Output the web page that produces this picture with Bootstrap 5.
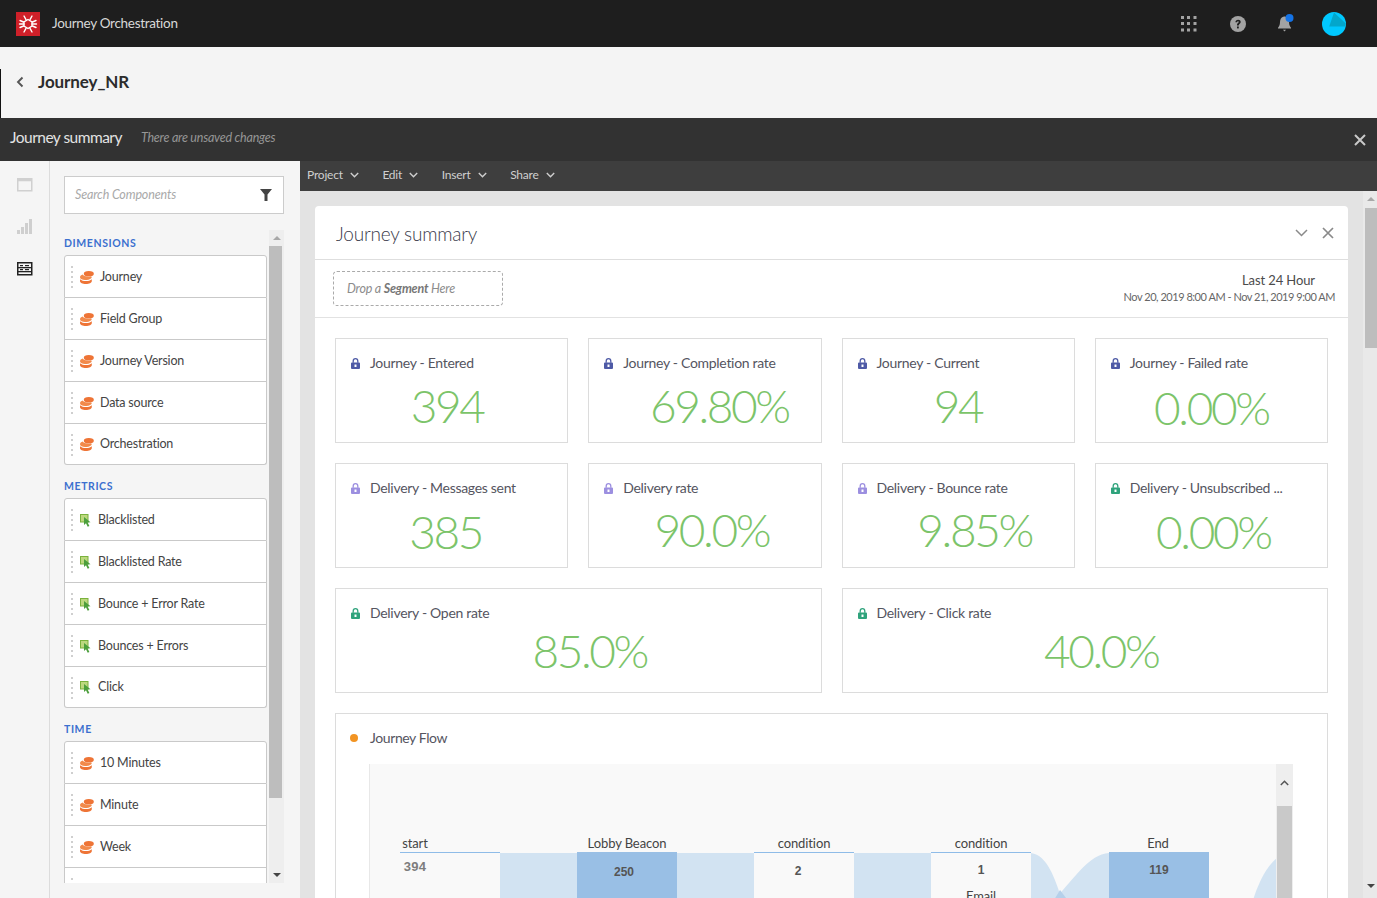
<!DOCTYPE html>
<html lang="en">
<head>
<meta charset="utf-8">
<title>Journey Orchestration</title>
<link href="https://cdn.jsdelivr.net/npm/bootstrap@5.3.0/dist/css/bootstrap.min.css" rel="stylesheet">
<style>
html,body{height:898px;overflow:hidden;}
body{font-family:"Lato","Open Sans",sans-serif;color:#4b4b4b;background:#f5f5f5;}
.navbar.app-top{height:47px;background:#1e1e1e;padding:0 31px 0 16px;}
.app-name{color:#d8d8d8;font-size:13.5px;letter-spacing:-.3px;margin-left:12px;padding-bottom:1px;}
.ti-grid{margin-right:33px;}
.ti-help{margin-right:30px;}
.ti-bell{margin-right:28px;}
.sub-head{height:71px;background:#f4f4f4;padding-top:22px;}
.sub-inner{height:49px;border-left:1px solid #111;padding:0 0 24px 15px;}
.sub-title{font-size:17px;font-weight:700;color:#2c2c2c;margin-left:14px;line-height:25px;letter-spacing:-.1px;}
.sum-bar{height:43px;background:#323232;padding:0 11px 3px 10px;}
.sum-title{color:#e3e3e3;font-size:15.5px;letter-spacing:-.52px;}
.sum-note{color:#969696;font-style:italic;font-size:12.5px;letter-spacing:-.22px;margin-left:19px;}
.work{height:737px;}
.rail{width:50px;background:#f5f5f5;border-right:1px solid #dcdcdc;padding:17px 0 0 17px;gap:27px;}
.rail-last{margin-top:1px;}
.side{width:250px;background:#f5f5f5;padding:15px 16px 0 14px;}
.search-box{height:38px;background:#fff;border:1px solid #ccc;padding:0 11px 0 10px;}
.search-ph{font-style:italic;font-size:12.5px;color:#a9a9a9;letter-spacing:-.15px;}
.comp-wrap{height:653px;margin-top:16px;gap:2px;}
.comp-list{width:203px;overflow:hidden;}
.comp-head{font-size:10.5px;font-weight:700;letter-spacing:.6px;color:#3c70cf;line-height:14px;padding:6px 0 5px;}
.comp-head.later{padding:14px 0 5px;}
.comp-group{border-color:#c9c9c9;border-radius:3px;margin-bottom:0;}
.comp-item{height:42px;padding:1px 0 0 6px;border-color:#c9c9c9;font-size:12.5px;color:#444;letter-spacing:-.2px;}
.comp-item:first-child{height:43px;}
.comp-item:last-child{height:41px;}
.comp-item .list-dots{width:2px;height:22px;margin-right:7px;background:repeating-linear-gradient(#cfcfcf 0 2px,transparent 2px 5px);}
.comp-item svg{margin-right:6px;flex:none;}
.comp-item svg.ico-met{margin-right:7px;}
.side-track{width:15px;background:#eee;}
.track-btn{height:16px;}
.side-thumb{width:13px;height:552px;background:#bdbdbd;}
.main-col{width:1077px;}
.tool-bar{height:30px;background:#3e3e3e;padding:0 0 3px 7px;gap:23.5px;}
.tool-item{color:#cfcfcf;font-size:12px;letter-spacing:-.2px;gap:7px;}
.canvas-row{height:707px;background:#e3e3e3;}
.canvas-scroll{width:1063px;padding:15px 15px 0;overflow:hidden;}
.v-track{width:14px;background:#e9e9e9;padding-left:2px;}
.v-thumb{width:12px;height:140px;background:#bdbdbd;margin-top:1px;}
.v-end{height:16px;}
.panel{background:#fff;border-radius:4px 4px 0 0;min-height:720px;}
.panel-head{height:54px;border-bottom:1px solid #dedede;padding:0 14px 0 21px;}
.panel-title{font-size:19px;font-weight:300;color:#3a3a4a;letter-spacing:-.2px;padding-top:4px;}
.panel-tools{gap:14px;margin-top:1px;}
.seg-row{height:58px;border-bottom:1px solid #e2e2e2;padding:0 13px 0 18px;}
.drop-box{width:170px;height:35px;border:1px dashed #aaa;border-radius:4px;padding:1px 0 0 13px;font-style:italic;font-size:12.5px;color:#8c8c8c;letter-spacing:-.2px;}
.drop-box b{font-weight:700;color:#777;}
.range-a{font-size:13px;color:#4b4b4b;line-height:16px;padding:0 20px 1px 0;margin-top:-1px;letter-spacing:-.1px;}
.range-b{font-size:11px;color:#666;line-height:16px;letter-spacing:-.47px;}
.tiles{display:grid;grid-template-columns:repeat(4,1fr);gap:20px;padding:20px 20px 0;}
.tile{height:105px;border:1px solid #dcdcdc;border-radius:0;padding:14px 15px 0;}
.tile-wide{grid-column:span 2;}
.tile-head{font-size:14px;font-weight:400;color:#55555f;line-height:20px;letter-spacing:-.3px;gap:10px;}
.lock-a{color:#4e5aa6;}
.lock-b{color:#9c8fe0;}
.lock-c{color:#2fa37c;}
.tile-num{font-weight:300;color:#7cc46a;font-size:46px;line-height:54px;letter-spacing:-2.4px;text-align:center;margin-top:1px;}
.row-one{margin-top:6px;}
.row-one-low{margin-top:8px;}
.row-two{margin-top:5px;}
.row-two-low{margin-top:7px;}
.shift-a{padding-right:9px;}
.shift-b{padding-left:29px;}
.shift-d{padding-left:0;}
.shift-e{padding-right:12px;}
.shift-h{padding-left:4px;}
.shift-i{padding-left:33px;}
.shift-j{padding-left:14px;}
.shift-k{padding-left:23px;}
.shift-g{padding-left:33px;}
.flow-tile{grid-column:span 4;height:300px;border:1px solid #dcdcdc;border-radius:0;padding:14px 0 0 14px;}
.flow-tile .tile-head{gap:12px;letter-spacing:-.4px;}
.flow-dot{width:8px;height:8px;border-radius:50%;background:#f29423;}
.flow-box{margin:16px 34px 0 19px;height:180px;}
.flow-canvas{width:908px;height:180px;background:#f9f9f9;border-left:1px solid #e8e8e8;overflow:hidden;}
.flow-canvas svg{position:absolute;left:0;top:0;}
.flow-label{position:absolute;font-size:13px;color:#444;line-height:16px;letter-spacing:-.1px;white-space:nowrap;transform:translateX(-50%);}
.flow-val{position:absolute;font-family:"Liberation Sans",Arial,sans-serif;font-size:12px;font-weight:700;color:#555;line-height:14px;transform:translateX(-50%);}
.flow-val.muted{font-size:13px;color:#7d7d7d;letter-spacing:.3px;}
.flow-track{width:17px;height:180px;background:#eee;}
.flow-up{height:42px;padding-top:5px;text-align:center;}
.flow-thumb{width:15px;margin-left:1px;height:138px;background:#c9c9c9;}
</style>
</head>
<body>

<nav class="navbar app-top d-flex align-items-center justify-content-between flex-nowrap">
  <div class="d-flex align-items-center">
    <svg width="24" height="24" viewBox="0 0 24 24" aria-hidden="true">
      <rect width="24" height="24" fill="#cf2029"/>
      <g stroke="#fff" stroke-width="1.4" fill="none" stroke-linecap="round">
        <path d="M12 7.500l4 2.300v4.400l-4 2.300-4-2.300V9.800z"/>
        <path d="M8 4l2 3.600M16 4l-2 3.600M8 20l2-3.600M16 20l-2-3.600M3.500 12H8M20.500 12H16M4 8.500l3.500 1.500M20 8.500l-3.500 1.500M4 15.500l3.500-1.500M20 15.500l-3.500-1.500"/>
      </g>
    </svg>
    <span class="app-name">Journey Orchestration</span>
  </div>
  <div class="d-flex align-items-center">
    <svg class="ti-grid" width="16" height="16" viewBox="0 0 16 16" aria-hidden="true"><g fill="#a3a3a3"><rect width="3" height="3"/><rect x="6" width="3" height="3"/><rect x="12.500" width="3" height="3"/><rect y="6" width="3" height="3"/><rect x="6" y="6" width="3" height="3"/><rect x="12.500" y="6" width="3" height="3"/><rect y="12.500" width="3" height="3"/><rect x="6" y="12.500" width="3" height="3"/><rect x="12.500" y="12.500" width="3" height="3"/></g></svg>
    <svg class="ti-help" width="16" height="16" viewBox="0 0 16 16" aria-hidden="true"><circle cx="8" cy="8" r="8" fill="#a3a3a3"/><path d="M5.400 6.200c0-1.600 1.200-2.500 2.700-2.500s2.600.9 2.600 2.200c0 1.900-2 1.800-2 3.500H7c0-2.500 1.800-2.500 1.800-3.400 0-.5-.3-.8-.8-.8-.6 0-.9.400-.9 1z" fill="#1e1e1e"/><rect x="7" y="10.500" width="1.800" height="1.900" fill="#1e1e1e"/></svg>
    <svg class="ti-bell" width="18" height="19" viewBox="0 0 18 19" aria-hidden="true"><path d="M8 2.500c-3 .6-4 3-4 5.500 0 3-1 4.500-2 5.800v.7h13v-.7c-1-1.300-2-2.800-2-5.800 0-2.500-1-4.900-4-5.500z" fill="#a3a3a3"/><path d="M7 15.800h3l-1.500 1.700z" fill="#a3a3a3"/><circle cx="13.500" cy="4" r="4" fill="#1473e6"/></svg>
    <svg width="24" height="24" viewBox="0 0 24 24" aria-hidden="true"><circle cx="12" cy="12" r="12" fill="#00c8ff"/><path d="M12 .5 L23.800 11.500 A12 12 0 0 1 22.800 14.500 H7.200z" fill="#03a6cb"/></svg>
  </div>
</nav>

<div class="sub-head">
  <div class="sub-inner d-flex align-items-center">
    <svg width="8" height="12" viewBox="0 0 8 12" aria-hidden="true"><path d="M6.500 1.500 2 6l4.500 4.500" fill="none" stroke="#555" stroke-width="1.900"/></svg>
    <span class="sub-title">Journey_NR</span>
  </div>
</div>

<div class="sum-bar d-flex align-items-center">
  <span class="sum-title">Journey summary</span>
  <span class="sum-note">There are unsaved changes</span>
  <svg class="ms-auto mt-1" width="12" height="12" viewBox="0 0 12 12" aria-hidden="true"><path d="M1 1l10 10M11 1 1 11" stroke="#c9c9c9" stroke-width="2"/></svg>
</div>

<div class="work d-flex">
  <div class="rail d-flex flex-column">
    <svg width="16" height="14" viewBox="0 0 16 14" aria-hidden="true"><rect x=".75" y=".75" width="14" height="12" fill="none" stroke="#d0d0d0" stroke-width="1.500"/><rect x=".75" y=".75" width="14" height="2.500" fill="#d0d0d0"/></svg>
    <svg width="16" height="15" viewBox="0 0 16 15" aria-hidden="true"><g fill="#cfcfcf"><rect y="11" width="3" height="4"/><rect x="4" y="8" width="3" height="7"/><rect x="8" y="4" width="3" height="11"/><rect x="12" width="3" height="15"/></g></svg>
    <svg class="rail-last" width="16" height="14" viewBox="0 0 16 14" aria-hidden="true"><rect x=".75" y=".75" width="14" height="12" fill="none" stroke="#222" stroke-width="1.500"/><g fill="#222"><rect x="1" y="5" width="14" height="1.300"/><rect x="1" y="9" width="14" height="1.300"/><rect x="3" y="3" width="3" height="1.200"/><rect x="8" y="3" width="4" height="1.200"/><rect x="3" y="7" width="3" height="1.200"/><rect x="8" y="7" width="4" height="1.200"/></g></svg>
  </div>

  <aside class="side">
    <div class="search-box d-flex align-items-center justify-content-between">
      <span class="search-ph">Search Components</span>
      <svg width="12" height="12" viewBox="0 0 12 12" aria-hidden="true"><path d="M0 0h12L7.500 5.500V12h-3V5.500z" fill="#444"/></svg>
    </div>
    <div class="comp-wrap d-flex">
      <div class="comp-list">
        <div class="comp-head">DIMENSIONS</div>
        <div class="list-group comp-group">
          <div class="list-group-item comp-item d-flex align-items-center"><span class="list-dots"></span><svg width="14" height="13" viewBox="0 0 14 13"><use href="#dim"/></svg>Journey</div>
          <div class="list-group-item comp-item d-flex align-items-center"><span class="list-dots"></span><svg width="14" height="13" viewBox="0 0 14 13"><use href="#dim"/></svg>Field Group</div>
          <div class="list-group-item comp-item d-flex align-items-center"><span class="list-dots"></span><svg width="14" height="13" viewBox="0 0 14 13"><use href="#dim"/></svg>Journey Version</div>
          <div class="list-group-item comp-item d-flex align-items-center"><span class="list-dots"></span><svg width="14" height="13" viewBox="0 0 14 13"><use href="#dim"/></svg>Data source</div>
          <div class="list-group-item comp-item d-flex align-items-center"><span class="list-dots"></span><svg width="14" height="13" viewBox="0 0 14 13"><use href="#dim"/></svg>Orchestration</div>
        </div>
        <div class="comp-head later">METRICS</div>
        <div class="list-group comp-group">
          <div class="list-group-item comp-item d-flex align-items-center"><span class="list-dots"></span><svg class="ico-met" width="11" height="13" viewBox="0 0 11 13"><use href="#met"/></svg>Blacklisted</div>
          <div class="list-group-item comp-item d-flex align-items-center"><span class="list-dots"></span><svg class="ico-met" width="11" height="13" viewBox="0 0 11 13"><use href="#met"/></svg>Blacklisted Rate</div>
          <div class="list-group-item comp-item d-flex align-items-center"><span class="list-dots"></span><svg class="ico-met" width="11" height="13" viewBox="0 0 11 13"><use href="#met"/></svg>Bounce + Error Rate</div>
          <div class="list-group-item comp-item d-flex align-items-center"><span class="list-dots"></span><svg class="ico-met" width="11" height="13" viewBox="0 0 11 13"><use href="#met"/></svg>Bounces + Errors</div>
          <div class="list-group-item comp-item d-flex align-items-center"><span class="list-dots"></span><svg class="ico-met" width="11" height="13" viewBox="0 0 11 13"><use href="#met"/></svg>Click</div>
        </div>
        <div class="comp-head later">TIME</div>
        <div class="list-group comp-group">
          <div class="list-group-item comp-item d-flex align-items-center"><span class="list-dots"></span><svg width="14" height="13" viewBox="0 0 14 13"><use href="#dim"/></svg>10 Minutes</div>
          <div class="list-group-item comp-item d-flex align-items-center"><span class="list-dots"></span><svg width="14" height="13" viewBox="0 0 14 13"><use href="#dim"/></svg>Minute</div>
          <div class="list-group-item comp-item d-flex align-items-center"><span class="list-dots"></span><svg width="14" height="13" viewBox="0 0 14 13"><use href="#dim"/></svg>Week</div>
          <div class="list-group-item comp-item d-flex align-items-center"><span class="list-dots"></span></div>
        </div>
      </div>
      <div class="side-track d-flex flex-column">
        <div class="track-btn d-flex justify-content-center align-items-center"><svg width="8" height="4" viewBox="0 0 8 4"><path d="M4 0l4 4H0z" fill="#a8a8a8"/></svg></div>
        <div class="side-thumb"></div>
        <div class="mt-auto track-btn d-flex justify-content-center align-items-center"><svg width="8" height="4" viewBox="0 0 8 4"><path d="M0 0h8L4 4z" fill="#444"/></svg></div>
      </div>
    </div>
  </aside>

  <div class="main-col d-flex flex-column">
    <div class="tool-bar d-flex align-items-center">
      <div class="tool-item d-flex align-items-center">Project<svg width="9" height="6" viewBox="0 0 9 6"><path d="M.8 1l3.700 3.700L8.200 1" fill="none" stroke="#cfcfcf" stroke-width="1.400"/></svg></div>
      <div class="tool-item d-flex align-items-center">Edit<svg width="9" height="6" viewBox="0 0 9 6"><path d="M.8 1l3.700 3.700L8.200 1" fill="none" stroke="#cfcfcf" stroke-width="1.400"/></svg></div>
      <div class="tool-item d-flex align-items-center">Insert<svg width="9" height="6" viewBox="0 0 9 6"><path d="M.8 1l3.700 3.700L8.200 1" fill="none" stroke="#cfcfcf" stroke-width="1.400"/></svg></div>
      <div class="tool-item d-flex align-items-center">Share<svg width="9" height="6" viewBox="0 0 9 6"><path d="M.8 1l3.700 3.700L8.200 1" fill="none" stroke="#cfcfcf" stroke-width="1.400"/></svg></div>
    </div>
    <div class="canvas-row d-flex">
      <div class="canvas-scroll">
        <section class="panel">
          <div class="panel-head d-flex align-items-center justify-content-between">
            <span class="panel-title">Journey summary</span>
            <div class="panel-tools d-flex align-items-center">
              <svg width="13" height="8" viewBox="0 0 13 8"><path d="M1 1l5.500 5.500L12 1" fill="none" stroke="#8a8a8a" stroke-width="1.500"/></svg>
              <svg width="12" height="12" viewBox="0 0 12 12"><path d="M1 1l10 10M11 1 1 11" stroke="#8a8a8a" stroke-width="1.700"/></svg>
            </div>
          </div>
          <div class="seg-row d-flex align-items-center justify-content-between">
            <div class="drop-box d-flex align-items-center"><span>Drop a <b>Segment</b> Here</span></div>
            <div class="text-end">
              <div class="range-a">Last 24 Hour</div>
              <div class="range-b">Nov 20, 2019 8:00 AM - Nov 21, 2019 9:00 AM</div>
            </div>
          </div>
          <div class="tiles">
            <div class="card tile"><div class="tile-head d-flex align-items-center"><svg class="lock-a" width="9" height="11" viewBox="0 0 9 11"><use href="#lock"/></svg>Journey - Entered</div><div class="tile-num row-one shift-a">394</div></div>
            <div class="card tile"><div class="tile-head d-flex align-items-center"><svg class="lock-a" width="9" height="11" viewBox="0 0 9 11"><use href="#lock"/></svg>Journey - Completion rate</div><div class="tile-num row-one shift-b">69.80%</div></div>
            <div class="card tile"><div class="tile-head d-flex align-items-center"><svg class="lock-a" width="9" height="11" viewBox="0 0 9 11"><use href="#lock"/></svg>Journey - Current</div><div class="tile-num row-one">94</div></div>
            <div class="card tile"><div class="tile-head d-flex align-items-center"><svg class="lock-a" width="9" height="11" viewBox="0 0 9 11"><use href="#lock"/></svg>Journey - Failed rate</div><div class="tile-num row-one-low shift-d">0.00%</div></div>

            <div class="card tile"><div class="tile-head d-flex align-items-center"><svg class="lock-b" width="9" height="11" viewBox="0 0 9 11"><use href="#lock"/></svg>Delivery - Messages sent</div><div class="tile-num row-two-low shift-e">385</div></div>
            <div class="card tile"><div class="tile-head d-flex align-items-center"><svg class="lock-b" width="9" height="11" viewBox="0 0 9 11"><use href="#lock"/></svg>Delivery rate</div><div class="tile-num row-two shift-j">90.0%</div></div>
            <div class="card tile"><div class="tile-head d-flex align-items-center"><svg class="lock-b" width="9" height="11" viewBox="0 0 9 11"><use href="#lock"/></svg>Delivery - Bounce rate</div><div class="tile-num row-two shift-i">9.85%</div></div>
            <div class="card tile"><div class="tile-head d-flex align-items-center"><svg class="lock-c" width="9" height="11" viewBox="0 0 9 11"><use href="#lock"/></svg>Delivery - Unsubscribed ...</div><div class="tile-num row-two-low shift-h">0.00%</div></div>

            <div class="card tile tile-wide"><div class="tile-head d-flex align-items-center"><svg class="lock-c" width="9" height="11" viewBox="0 0 9 11"><use href="#lock"/></svg>Delivery - Open rate</div><div class="tile-num shift-k">85.0%</div></div>
            <div class="card tile tile-wide"><div class="tile-head d-flex align-items-center"><svg class="lock-c" width="9" height="11" viewBox="0 0 9 11"><use href="#lock"/></svg>Delivery - Click rate</div><div class="tile-num shift-g">40.0%</div></div>

            <div class="card flow-tile">
              <div class="tile-head d-flex align-items-center"><span class="flow-dot"></span>Journey Flow</div>
              <div class="flow-box d-flex">
                <div class="flow-canvas position-relative flex-grow-1">
                  <svg width="908" height="180" viewBox="370 764 908 180" aria-hidden="true">
                    <rect x="400" y="852" width="100" height="1" fill="#8fbce8"/>
                    <rect x="500" y="853" width="77" height="60" fill="#d2e3f2"/>
                    <rect x="577" y="852" width="100" height="60" fill="#99bfe5"/>
                    <rect x="677" y="853" width="77" height="60" fill="#d2e3f2"/>
                    <rect x="754" y="852" width="100" height="1" fill="#8fbce8"/>
                    <rect x="854" y="853" width="77" height="60" fill="#d2e3f2"/>
                    <rect x="931" y="852" width="100" height="1" fill="#8fbce8"/>
                    <path d="M1031 853C1048 855 1056 882 1062 900L1040 920H1031z" fill="#d2e3f2"/>
                    <path d="M1109 853C1088 855 1075 878 1054 900L1070 920H1109z" fill="#d2e3f2"/>
                    <path d="M1060 890 1054 900 1070 912 1066 898z" fill="#b5d0ea"/>
                    <rect x="1109" y="852" width="100" height="60" fill="#99bfe5"/>
                    <path d="M1277 858C1265 868 1258 885 1253 900V920H1277z" fill="#d2e3f2"/>
                  </svg>
                  <span class="flow-label" style="left:45px;top:71px">start</span>
                  <span class="flow-label" style="left:257px;top:71px">Lobby Beacon</span>
                  <span class="flow-label" style="left:434px;top:71px">condition</span>
                  <span class="flow-label" style="left:611px;top:71px">condition</span>
                  <span class="flow-label" style="left:788px;top:71px">End</span>
                  <span class="flow-val muted" style="left:45px;top:96px">394</span>
                  <span class="flow-val" style="left:254px;top:101px">250</span>
                  <span class="flow-val" style="left:428px;top:100px">2</span>
                  <span class="flow-val" style="left:611px;top:99px">1</span>
                  <span class="flow-val" style="left:789px;top:99px">119</span>
                  <span class="flow-label" style="left:611px;top:124px">Email</span>
                </div>
                <div class="flow-track">
                  <div class="flow-up"><svg width="9" height="6" viewBox="0 0 9 6"><path d="M.8 5 4.500 1.300 8.200 5" fill="none" stroke="#555" stroke-width="1.500"/></svg></div>
                  <div class="flow-thumb"></div>
                </div>
              </div>
            </div>
          </div>
        </section>
      </div>
      <div class="v-track d-flex flex-column">
        <div class="v-end d-flex justify-content-center align-items-center"><svg width="8" height="4" viewBox="0 0 8 4"><path d="M4 0l4 4H0z" fill="#a8a8a8"/></svg></div>
        <div class="v-thumb"></div>
        <div class="mt-auto v-end d-flex justify-content-center align-items-center mb-1"><svg width="8" height="4" viewBox="0 0 8 4"><path d="M0 0h8L4 4z" fill="#444"/></svg></div>
      </div>
    </div>
  </div>
</div>

<svg width="0" height="0" class="d-none" aria-hidden="true">
  <defs>
    <symbol id="dim" viewBox="0 0 14 13">
      <ellipse cx="8.800" cy="2.800" rx="5" ry="2.800" fill="#ee7436"/>
      <path d="M0 6.200C0 5 1.200 4 2.800 3.600 3.800 5.300 7 6.200 10.500 5.600 11.500 5.800 12 6.300 11.500 7 10 8.700 7 9 5 9 2.500 9 0 8 0 6.200z" fill="#f28a4b"/>
      <path d="M0 8.200C1.500 9.600 3.500 10 6 10c2.300 0 4.300-.5 5.800-1.800V10c0 1.900-2.600 3-5.900 3S0 11.900 0 10z" fill="#ee7436"/>
    </symbol>
    <symbol id="met" viewBox="0 0 11 13">
      <rect x=".5" y=".5" width="7.500" height="7.500" fill="#bcd87e" stroke="#7ab23c"/>
      <path d="M4 3l6.500 5.200-2.900.3L9.400 12l-1.700.8L6 9.200 4 11z" fill="#4c9f3c"/>
    </symbol>
    <symbol id="lock" viewBox="0 0 9 11">
      <path fill="currentColor" fill-rule="evenodd" d="M0 5.500a1 1 0 0 1 1-1h7a1 1 0 0 1 1 1V10a1 1 0 0 1-1 1H1a1 1 0 0 1-1-1zM3.500 6.500v2.500h2V6.500z"/>
      <path d="M2.200 4.800V3a2.300 2.300 0 0 1 4.600 0v1.800" fill="none" stroke="currentColor" stroke-width="1.300"/>
    </symbol>
  </defs>
</svg>

<script src="https://cdn.jsdelivr.net/npm/bootstrap@5.3.0/dist/js/bootstrap.bundle.min.js"></script>
</body>
</html>
